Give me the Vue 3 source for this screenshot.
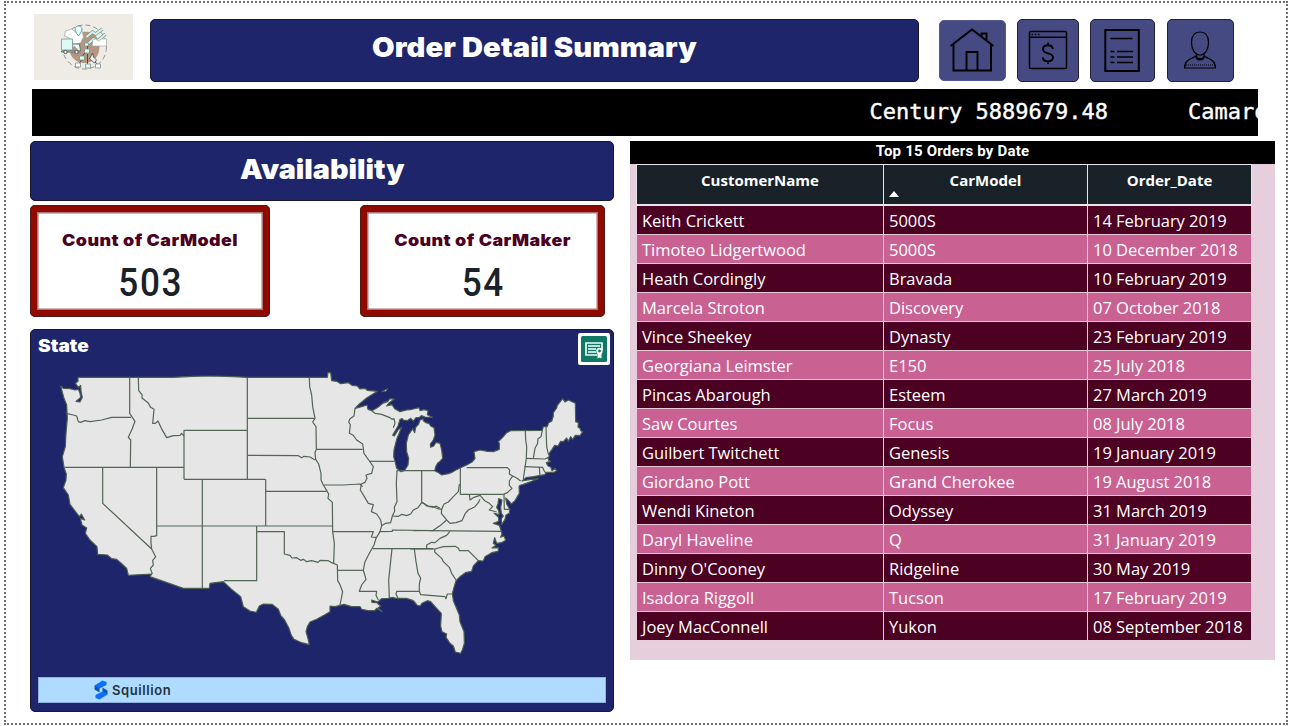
<script setup>
const orders = [
  ['Keith Crickett', '5000S', '14 February 2019'],
  ['Timoteo Lidgertwood', '5000S', '10 December 2018'],
  ['Heath Cordingly', 'Bravada', '10 February 2019'],
  ['Marcela Stroton', 'Discovery', '07 October 2018'],
  ['Vince Sheekey', 'Dynasty', '23 February 2019'],
  ['Georgiana Leimster', 'E150', '25 July 2018'],
  ['Pincas Abarough', 'Esteem', '27 March 2019'],
  ['Saw Courtes', 'Focus', '08 July 2018'],
  ['Guilbert Twitchett', 'Genesis', '19 January 2019'],
  ['Giordano Pott', 'Grand Cherokee', '19 August 2018'],
  ['Wendi Kineton', 'Odyssey', '31 March 2019'],
  ['Daryl Haveline', 'Q', '31 January 2019'],
  ["Dinny O'Cooney", 'Ridgeline', '30 May 2019'],
  ['Isadora Riggoll', 'Tucson', '17 February 2019'],
  ['Joey MacConnell', 'Yukon', '08 September 2018']
]

// Coastline in stretches, each with the origin of its own coordinates.
const coast = [
  [0, 0, '122,108 130,115 150,116 165,120 175,118 180,130 182,142 168,154 180,156 187,142 183,124 182,106 175,112 166,100 174,94 174,82 460,82 520,79 570,78 640,80 682,82'],
  [600, 0, '322,82 324,67 332,68 335,92 350,94 362,101 385,98 396,106 412,108 420,117 434,115 442,121 472,124 440,144 418,162 405,175 425,170 441,165 444,178 456,182 474,172 488,160 502,155 510,146 523,147 506,160 500,168 516,164 524,176 540,185 560,180 571,179 580,177 597,173 600,182 612,179 624,182 622,194 637,202 615,201 604,197 598,202 588,203 580,213 572,205 562,212 550,210 547,206 540,208 534,228 518,256 523,258 534,240 545,232 530,268 522,300 521,320 526,338 530,355 543,365 554,361 564,345 566,325 560,305 559,280 565,255 572,245 578,236 584,248 587,232 596,222 600,210 609,206'],
  [1140, 90, '70,122 78,128 88,131 92,138 102,143 105,165 100,180 91,192 92,202 101,198 108,187 120,190 125,210 128,235 119,245 114,248 108,258 104,272 116,278 125,285 145,281 156,277 168,270 182,263 200,255 216,246 225,236 222,215 240,210 262,214 280,215 298,208 298,190 295,185 308,172 320,158 332,152 427,151 430,140 442,140 446,128 455,124 460,108 460,98 470,84 472,76 488,56 495,66 505,60 526,70 527,125 535,128 534,142 540,145 542,152 548,155 540,167 526,166 518,178 512,170 505,184 500,174 490,185 482,184 474,198 464,196 456,208 446,222 448,228 444,234 446,241 452,244 439,248 444,258 452,261 456,272 466,265 469,273 462,277 446,277 440,277 434,284 400,290 378,293 366,303 392,298 415,296 395,304 370,313 360,316 357,320 358,340 345,362 334,372 328,364 317,354 320,372 329,388 328,400 318,405 315,418 305,434 304,416 310,408 304,400 302,382 306,360 296,356 294,372 290,382 296,392 298,404 282,400 296,412 296,424 280,430 298,436 302,448 306,462 302,472 312,468 317,481 304,488 290,490 284,473 280,490 288,496 276,504 296,503 294,514 275,518 255,530 250,543 235,542 220,558 215,574 196,578 180,590 168,602 162,622 157,640 160,662 178,705 180,725 192,755 193,790 187,810 182,820 166,816 160,798 150,790 138,772 140,762 126,755 122,738 124,700 110,685 92,665 82,662 66,670 60,678 52,676 40,662 20,655 0,655'],
  [600, 0, '528,745 518,742 505,745 485,746 473,756 455,750 456,757 470,758 482,768 474,774 487,785 470,775 464,782 445,782 436,780 425,778 420,770 395,770 372,763 345,770 330,768 330,785 312,796 290,808 270,816 262,830 258,845 264,866 268,884 245,878 222,868 214,856 207,835 194,810 182,796 175,778 156,763 130,762 118,768 109,787 90,783 70,770 62,740 35,718 10,695'],
  [0, 0, '570,700 568,715 490,715 390,680 395,672 325,676 320,655 306,642 290,628 275,626 262,615 233,613 231,590 210,570 196,550 200,534 186,525 181,505 194,510 184,492 178,500 150,463 145,435 130,413 138,390 139,372 132,352 127,320 136,290 138,250 142,205 140,165 132,145']
]
const coastPath = 'M' + coast.map(([ox, oy, pts]) =>
  pts.split(' ').map(p => {
    const [x, y] = p.split(',').map(Number)
    return `${x + ox} ${y + oy}`
  }).join('L')
).join('L') + 'Z'

// State borders, one list per region of the map.
const borders = [
  { region: 'west', x: 0, y: 0, lines: [
    '138,190 160,195 170,198 175,215 182,217 195,212 210,215 245,210 275,202 333,202',
    '329,82 329,190 345,214 336,238 325,262 332,270 331,352',
    '355,82 356,122 366,134 366,144 384,158 392,172 402,178 398,220 406,220 414,213 424,235 440,263 460,257 480,256 485,250 492,258',
    '492,388 492,241 682,241', '133,352 492,352', '492,388 736,388', '682,82 682,388',
    '248,352 248,460 395,597', '410,352 410,557 402,559 393,559 393,580 395,597 407,620 398,632 400,645 391,655 397,672',
    '547,388 547,715', '410,528 937,528', '710,528 710,692 612,692'
  ] },
  { region: 'central', x: 600, y: 0, lines: [
    '82,205 285,205', '82,316 235,317 245,323 252,319 270,321 285,330', '137,388 137,528', '137,424 320,424',
    '268,82 269,110 275,135 278,170 285,205 278,216 288,230 289,298 285,308 287,328 296,342 303,370 303,390 310,405 322,425 326,432 324,445 337,457 338,545 343,580 341,640',
    '289,298 428,298', '310,405 370,405 420,402 428,410',
    '405,175 402,198 390,206 386,216 391,224 388,250 400,256 410,270 428,282 432,310 446,330 460,350 455,370 438,375 441,385 435,397 424,402 421,420 433,440 445,460 460,464 454,485 470,492 482,510 485,527 480,545 468,565 462,585 448,610 435,635 430,660 438,688 425,705 418,724 470,724 468,736 475,750',
    '448,334 523,334', '455,182 465,190 485,193 508,202 516,208 522,206 525,220 520,233',
    '531,362 529,400 531,455 523,472 524,484 517,498 512,518 497,520 485,527', '530,362 645,362', '605,362 605,460',
    '517,498 536,499 545,493 560,497 572,492 580,480 594,473 605,458 612,460 620,468 640,472 648,468 660,475',
    '338,545 460,545 454,561 468,562', '478,545 517,544 517,540 641,542', '458,596 640,596',
    '516,596 506,690 508,745', '534,745 528,732 530,724 598,724', '352,661 432,661',
    '110,545 193,545 193,612 210,616 216,624 230,623 242,631 250,628 260,635 275,632 294,637 300,631 325,632 335,638 352,645 353,692 360,704 368,725 360,765'
  ] },
  { region: 'east', x: 1140, y: 90, lines: [
    '65,367 85,378 100,380 110,385 125,388 132,372 145,366 160,350 175,335 178,312', '181,263 181,343 310,343',
    '125,388 124,400 140,420 150,430 168,428 186,422 196,400 205,390 225,380 235,368 240,358', '140,420 124,434 100,451 40,452',
    '200,263 322,263 329,270 328,282 338,288 328,303 328,316 336,325 322,338 310,343',
    '208,343 210,360 222,352 240,346 254,362 268,370 278,380 268,390 290,396', '312,343 313,388 328,388', '338,288 350,294 362,303',
    '376,151 377,180 380,200 379,235 370,297', '427,151 423,170 414,176 413,190 405,205 400,235', '438,140 440,200 445,222',
    '379,235 435,237 445,232', '373,260 428,262 432,272 438,280', '418,262 420,288',
    '90,452 305,454', '30,507 105,507 130,500 165,499 176,505 178,512 205,512 235,542',
    '80,505 80,495 95,487 105,488 120,475 140,466 150,454', '105,507 104,516 125,535 130,545 148,562 155,580 168,600',
    '43,507 48,545 54,580 62,594 58,612 58,634 62,644 135,650 138,656 142,642 157,642'
  ] }
]
</script>

<template>
  <div class="page">
    <main class="canvas">
      <header class="top">
        <svg class="logo" viewBox="0 0 98 66">
          <circle cx="50" cy="33" r="22" fill="none" stroke="#777b78" stroke-width=".8" stroke-dasharray="5 3" />
          <path d="M48 18c10-2 17 5 17 15 0 9-6 16-15 16-8 0-15-6-15-14l8-5z" fill="#b39780" />
          <path d="M31 17l6-2 4 3 6-3 2 8-3 6-8 2-3-7-5-2z" fill="#fff" stroke="#a6aaa8" stroke-width=".8" />
          <path d="M27 25h11v11H27z" fill="#dcfbf7" stroke="#83aaa6" />
          <path d="M38 30h7l1 7H27v1h19" fill="#eefffc" stroke="#65706f" />
          <circle cx="31" cy="38" r="1.7" fill="#fff" stroke="#555" /><circle cx="42" cy="38" r="1.7" fill="#fff" stroke="#555" />
          <path d="M44 22c-5-6-4-10 0-10s5 4 0 10z" fill="#dcfbf7" stroke="#75a4a1" /><circle cx="44" cy="15" r="1.5" fill="#fff" />
          <path d="M52 23l6-5 3 2 7-5M52 31l7-6 4 2 8-7" fill="none" stroke="#718e8b" stroke-width="3.3" />
          <path d="M52 23l6-5 3 2 7-5M52 31l7-6 4 2 8-7" fill="none" stroke="#d7f5f0" stroke-width="2" />
          <path d="M58 26l3-1 3 2 3-2h5v7H58z" fill="#fff" stroke="#a8aaa9" stroke-width=".7" />
          <path d="M53 31v4M52 37l-4 5M48 45l-4 5M53 40v11M58 46l5 4" fill="none" stroke="#333" stroke-width=".8" />
          <g fill="#dcfbf7" stroke="#7a9491" stroke-width=".8"><path d="M50 29h4v3h-4zM50 35h5v4h-5zM45 42h5v4h-5zM51 50h5v4h-5z" /><path fill="#fff" d="M41 49h5v4h-5zM61 50h5v4h-5z" /></g>
          <path d="M55 45l3-6 1 4 3 3-2 3z" fill="#eee" stroke="#333" stroke-width=".7" />
        </svg>
        <h1 class="banner title"><span>Order Detail Summary</span></h1>
        <nav class="nav">
          <a class="tile home"><svg viewBox="0 0 66 61"><g fill="none" stroke="#000" stroke-width="1.9"><path d="M11.5 26L33 9.5 54.500 26M14.500 24v26.500h37.500V24M27.500 50V32h11v18M42.500 16v-2.500h5V21" /></g></svg></a>
          <a class="tile money"><svg viewBox="0 0 62 63"><g fill="none" stroke="#000" stroke-width="1.5"><rect x="12.500" y="12.500" width="37" height="37" rx="1.500" /><path d="M12.500 18.300h37" /><path stroke-dasharray="1.600 1.600" d="M14.500 15.500h9" /><path stroke-width="1.900" d="M36 30c-.5-2.500-2.500-3.700-5-3.700-3 0-5 1.500-5 4 0 5.500 10 2.500 10 8 0 2.500-2 4-5 4s-5-1.500-5.300-4M31 23.500v3M31 42v3" /></g></svg></a>
          <a class="tile list"><svg viewBox="0 0 65 63"><g fill="none" stroke="#000" stroke-width="1.600"><rect x="15.300" y="11" width="33.500" height="41" stroke-width="2" /><path d="M20.500 19.500h22M27 32.500h16M27 38h16M27 43.500h16M20.500 32.500h4M20.500 38h4M20.500 43.500h4" /></g></svg></a>
          <a class="tile user"><svg viewBox="0 0 67 63"><g fill="none" stroke="#000" stroke-width="1.200"><path d="M24.500 23.500c0-7 3.500-10.500 8.500-10.500s8.500 3.500 8.500 10.500S38 36 33 36s-8.500-5.500-8.500-12.500zM29.500 35v3q3.500 3.500 7.500 0v-3M29 36.500c-1 3-11.500 2.500-11.500 12.500h31c0-10-10.500-9.500-11.500-12.500M29 37q0 4 4 4t4-4" /><path stroke-dasharray="1 1" d="M19 46h28.500" /></g></svg></a>
        </nav>
      </header>

      <section class="ticker"><span>Century 5889679.48</span><span class="next">Camaro</span></section>

      <div class="columns">
        <section class="left">
          <h2 class="banner availability"><span>Availability</span></h2>
          <div class="cards">
            <article class="card model"><h3>Count of CarModel</h3><strong>503</strong></article>
            <article class="card maker"><h3>Count of CarMaker</h3><strong>54</strong></article>
          </div>
          <article class="state">
            <div class="state-head">
              <h3>State</h3>
              <div class="badge"><svg viewBox="0 0 26 26"><rect width="26" height="26" rx="1.500" fill="#117865" /><path d="M16 19H5V7h16v7" fill="none" stroke="#e7fffa" stroke-width="1.700" /><path d="M7 10h12M7 13h8M7 16h8" stroke="#b9e5dc" stroke-width="1.800" /><circle cx="18.500" cy="15" r="2.300" fill="#117865" stroke="#fff" stroke-width="1.800" /><path d="M16.500 17v5.500l2-1 2 1V17z" fill="#fff" /></svg></div>
            </div>
            <svg class="map" viewBox="54 48 1704 934">
              <path :d="coastPath" class="land" />
              <g v-for="b in borders" :key="b.region" :transform="`translate(${b.x} ${b.y})`">
                <polyline v-for="line in b.lines" :key="line" :points="line" class="border" />
              </g>
              <path class="islet" d="M1085 125l18-9-5 8zM1090 157l16-4" />
            </svg>
            <footer class="brand">
              <svg viewBox="0 0 14 20"><path fill="#0d6efd" d="M.5 5.500L8.500.5l4 1.500v3L5.500 8.500z" /><path fill="#0756bd" d="M.5 5.500l5 2.500v4.500l-5-3z" /><path fill="#0756bd" d="M8.500 7.500l5 3v4l-5-2.500z" /><path fill="#0d6efd" d="M13.500 14.500l-8 5-4-1.500v-3l7-3.500z" /></svg>
              <span>Squillion</span>
            </footer>
          </article>
        </section>

        <section class="orders">
          <h2><span>Top 15 Orders by Date</span></h2>
          <table>
            <colgroup><col class="c1"><col class="c2"><col class="c3"></colgroup>
            <thead><tr><th>CustomerName</th><th class="sorted">CarModel</th><th>Order_Date</th></tr></thead>
            <tbody><tr v-for="row in orders" :key="row[0]"><td v-for="cell in row" :key="cell">{{ cell }}</td></tr></tbody>
          </table>
        </section>
      </div>
    </main>
  </div>
</template>

<style>
body { background: #fff; }
</style>
<style scoped>
* { box-sizing: border-box; }
h1, h2, h3 { margin: 0; }
svg { display: block; }
.page { width: 1291px; height: 726px; padding: 1px 0 0 4px; overflow: hidden; background: #fff; }
.canvas { width: 1284px; height: 724px; border: 2px dotted #6d6d72; display: flex; flex-direction: column; }
.top { display: flex; height: 86px; padding: 11px 0 0 28px; align-items: flex-start; }
.logo { width: 99px; height: 66px; background: #efece6; }
.banner { background: #1e256a; border: 1px solid #15182f; border-radius: 5px; color: #fff; text-align: center; font: 900 27px Inter, "Liberation Sans", sans-serif; }
.banner span { display: inline-block; transform: scaleX(1.08); }
.title { width: 769px; height: 63px; margin: 5px 0 0 17px; line-height: 55px; letter-spacing: .1px; }
.nav { display: flex; margin: 5px 0 0 20px; align-items: center; }
.tile { height: 63px; background: #464a82; border: 1px solid #202336; border-radius: 5px; }
.tile svg { margin: -1px; height: 63px; }
.home { width: 67px; height: 61px; border-color: #555990; }
.home svg { width: 66px; height: 61px; }
.money { width: 62px; margin-left: 11px; }
.money svg { width: 62px; }
.list { width: 65px; margin-left: 11px; }
.list svg { width: 65px; }
.user { width: 67px; margin-left: 12px; }
.user svg { width: 67px; }
.ticker { width: 1226px; height: 47px; margin-left: 26px; background: #000; color: #fff; overflow: hidden; white-space: nowrap; padding-left: 837.500px; font: 22px/45px "DejaVu Sans Mono", monospace; -webkit-text-stroke: .4px #fff; }
.next { margin-left: 80px; }
.columns { display: flex; margin: 5px 0 0 24px; gap: 16px; align-items: flex-start; }
.left { width: 584px; }
.availability { height: 60px; line-height: 55px; font-size: 27px; }
.availability span { transform: scaleX(1.065); }
.cards { display: flex; margin-top: 4px; gap: 90px; }
.card { height: 112px; border: 7px solid #910a00; border-radius: 5px; outline: 1px solid #531817; outline-offset: -1px; box-shadow: inset 0 0 0 1.500px #a87478; text-align: center; background: #fff; }
.model { width: 240px; }
.maker { width: 245px; }
.card h3 { color: #4c0022; font: 900 16px/20px Inter, "Liberation Sans", sans-serif; margin-top: 18px; letter-spacing: .4px; transform: scaleX(1.114); }
.card strong { display: block; font: 500 39px/46px Roboto, sans-serif; color: #1a2229; margin-top: 10px; letter-spacing: 1.800px; padding-left: 1.600px; transform: scaleX(.9); }
.state { height: 383px; margin-top: 12px; border: 1px solid #15182f; border-radius: 5px; background: #1e256a; padding: 3px 7px 0; }
.state-head { display: flex; justify-content: space-between; height: 33px; margin-right: -4px; }
.state h3 { color: #fff; font: 900 17px/26px Inter, "Liberation Sans", sans-serif; transform: scaleX(1.12); transform-origin: left; }
.badge { width: 32px; height: 32px; background: #fff; border-radius: 2px; padding: 3px; }
.map { width: 568px; height: 311.330px; }
.land { fill: #e6e6e6; stroke: #4b5e50; stroke-width: 3.500; stroke-linejoin: round; }
.border { fill: none; stroke: #536556; stroke-width: 3.600; stroke-linejoin: round; }
.islet { fill: #e6e6e6; stroke: #4b5e50; stroke-width: 3; }
.brand { display: flex; align-items: center; height: 26px; background: #aedbff; padding-left: 55px; border: 1px solid #90b2e2; font: 600 13px Inter, sans-serif; color: #233340; letter-spacing: .6px; }
.brand svg { width: 14px; height: 20px; margin-right: 4px; }
.orders { width: 645px; height: 519px; background: #e7cedd; }
.orders h2 { height: 23px; background: #000; color: #fff; font: 700 15px/21px Roboto, sans-serif; text-align: center; letter-spacing: .2px; }
table { width: 615px; margin-left: 6px; table-layout: fixed; border-collapse: collapse; font: 16.500px "Open Sans", sans-serif; color: #fff; }
.c1 { width: 247px; }
.c2 { width: 204px; }
.c3 { width: 164px; }
th { height: 40px; padding: 0 0 8px; background: #1a2229; border: 1px solid #e9e6e9; border-bottom-width: 2px; font: 700 15px/24px "Open Sans", sans-serif; }
.sorted { position: relative; }
.sorted::after { content: ''; position: absolute; left: 5px; bottom: 7px; border: 5.500px solid transparent; border-top: 0; border-bottom: 6px solid #fff; }
td { height: 29px; padding: 2px 0 1px 5px; line-height: 25px; border: 1px solid #e7cbd8; white-space: nowrap; background: #4c0022; letter-spacing: -.02px; }
tr:nth-child(even) td { background: #c96192; }
</style>
